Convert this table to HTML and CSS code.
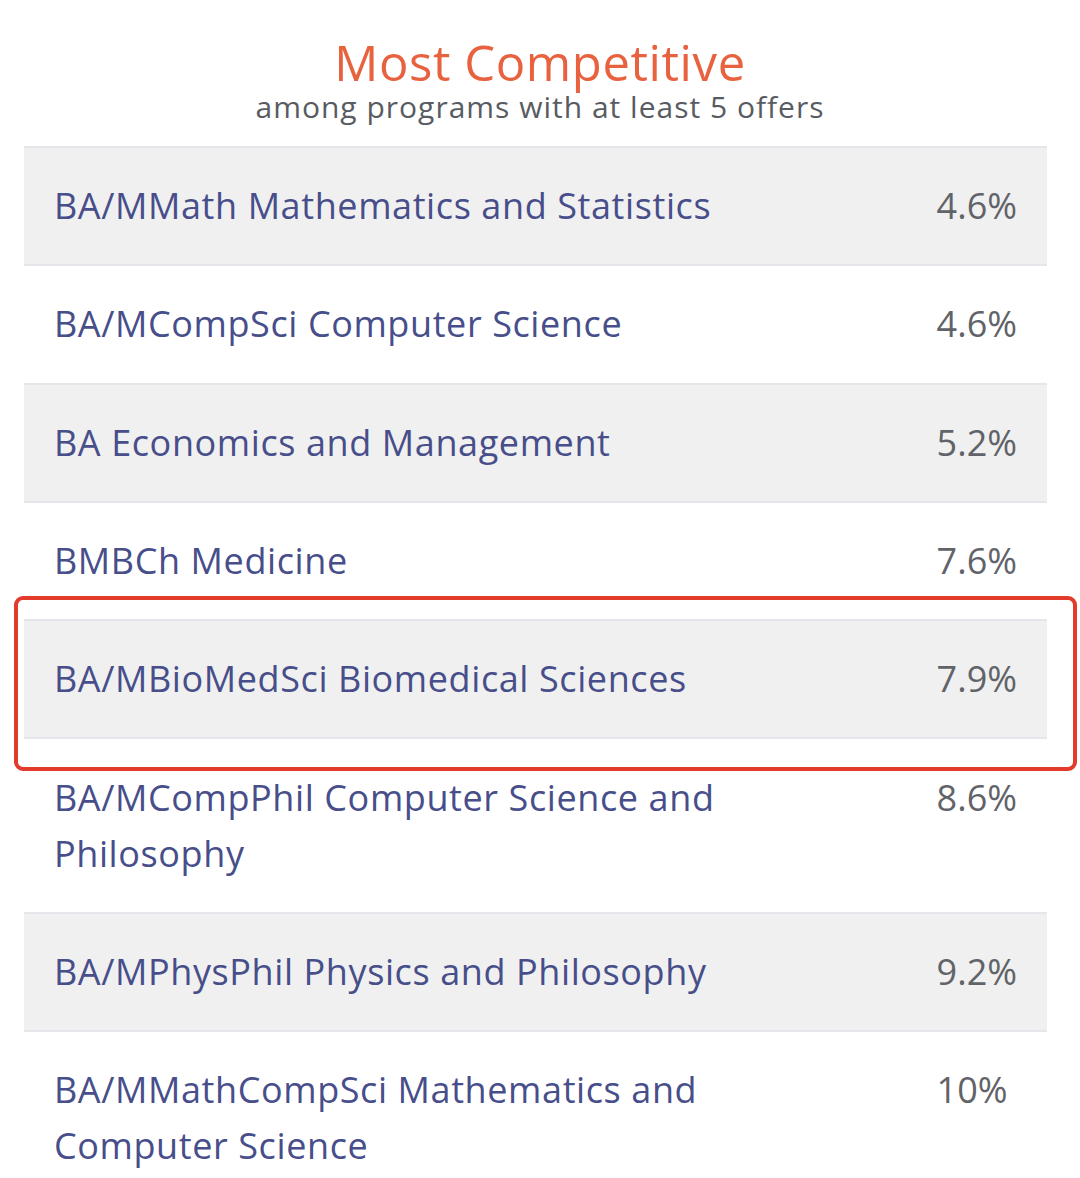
FILE: index.html
```html
<!DOCTYPE html>
<html lang="en">
<head>
<meta charset="utf-8">
<title>Most Competitive</title>
<link rel="stylesheet" href="styles.css">
</head>
<body>
<div class="page">
  <header class="head">
    <h1 class="title">Most Competitive</h1>
    <p class="subtitle">among programs with at least 5 offers</p>
  </header>
  <div class="table-wrap">
    <table class="rates">
      <tbody>
        <tr class="shade"><td class="name">BA/MMath Mathematics and Statistics</td><td class="pct">4.6%</td></tr>
        <tr><td class="name">BA/MCompSci Computer Science</td><td class="pct">4.6%</td></tr>
        <tr class="shade"><td class="name">BA Economics and Management</td><td class="pct">5.2%</td></tr>
        <tr><td class="name">BMBCh Medicine</td><td class="pct">7.6%</td></tr>
        <tr class="shade"><td class="name">BA/MBioMedSci Biomedical Sciences</td><td class="pct">7.9%</td></tr>
        <tr><td class="name">BA/MCompPhil Computer Science and Philosophy</td><td class="pct">8.6%</td></tr>
        <tr class="shade"><td class="name">BA/MPhysPhil Physics and Philosophy</td><td class="pct">9.2%</td></tr>
        <tr><td class="name">BA/MMathCompSci Mathematics and Computer Science</td><td class="pct">10%</td></tr>
      </tbody>
    </table>
    <div class="highlight"></div>
  </div>
</div>
</body>
</html>
```

FILE: styles.css
```css
html, body {
  margin: 0;
  padding: 0;
  background: #ffffff;
}
body {
  font-family: "Open Sans", "DejaVu Sans", sans-serif;
  width: 1080px;
  height: 1178px;
  overflow: hidden;
}
.page {
  padding-top: 33px;
}
.head {
  text-align: center;
}
.title {
  margin: 0;
  font-size: 49px;
  line-height: 58px;
  font-weight: 500;
  color: #e8623f;
  letter-spacing: 0.6px;
}
.subtitle {
  margin: 0;
  font-size: 30px;
  line-height: 32px;
  color: #585c62;
  letter-spacing: 1px;
}
.table-wrap {
  position: relative;
  margin: 23px 33px 0 24px;
}
.rates {
  width: 100%;
  border-collapse: collapse;
}
.rates tr {
  border-top: 2px solid #e4e6eb;
}
.rates tr.shade {
  background: #f0f0f0;
}
.rates td {
  padding: 30.15px 30px;
  font-size: 36px;
  line-height: 56px;
  vertical-align: top;
}
.name {
  color: #474e8a;
  letter-spacing: 0.6px;
}
.pct {
  width: 77px;
  color: #616368;
  white-space: nowrap;
}
.highlight {
  position: absolute;
  left: -10px;
  top: 450px;
  width: 1055px;
  height: 167px;
  border: 4px solid #e33b2b;
  border-radius: 9px;
}
```
